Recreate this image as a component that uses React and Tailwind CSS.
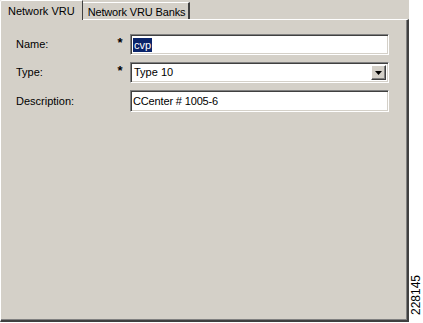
export default function App() {
  const font = { fontFamily: '"Liberation Sans", Arial, sans-serif' };
  const sunken =
    "border border-t-[#808080] border-l-[#808080] border-r-white border-b-white shadow-[inset_1px_1px_0_#404040,inset_-1px_-1px_0_#d4d0c8] bg-white";
  return (
    <div className="w-[423px] h-[323px] bg-white flex text-[11px] text-black" style={font}>
      <div className="w-[409px] h-[322px] flex flex-col bg-[#d4d0c8]">
        <div className="h-[19px] flex items-end pl-[2px] shrink-0">
          <div className="relative z-10 h-[20px] -mb-px -ml-[2px] px-[7px] pt-[2px] bg-[#d4d0c8] border-l border-t border-white border-r border-r-[#404040] rounded-tl-[2px]">
            Network VRU
          </div>
          <div className="h-[17px] pl-[5px] pr-[3px] pt-[1px] border-t border-white border-r-2 border-r-[#404040] tracking-[-0.15px]">
            Network VRU Banks
          </div>
        </div>
        <div className="flex-1 border-t border-l border-white border-r-2 border-r-[#404040] border-b-2 border-b-[#404040] shadow-[inset_-1px_-1px_0_#808080] flex flex-col pt-[14px] gap-[7px]">
          <div className="flex items-center h-[21px]">
            <div className="w-[105px] pl-[15px]">Name:</div>
            <div className="w-[24px] text-center text-[13px] font-bold leading-none -mt-[4px] pl-[4px]">*</div>
            <div className={`${sunken} w-[259px] h-[21px] flex items-center pl-[2px]`}>
              <span className="bg-[#0a246a] text-white px-[1px] leading-[14px]">cvp</span>
            </div>
          </div>
          <div className="flex items-center h-[21px]">
            <div className="w-[105px] pl-[15px]">Type:</div>
            <div className="w-[24px] text-center text-[13px] font-bold leading-none -mt-[4px] pl-[4px]">*</div>
            <div className={`${sunken} w-[259px] h-[21px] flex items-center pl-[3px] pr-[2px]`}>
              <span className="flex-1">Type 10</span>
              <div className="w-[15px] h-[15px] bg-[#d4d0c8] border border-t-white border-l-white border-r-[#404040] border-b-[#404040] shadow-[inset_-1px_-1px_0_#808080] flex items-center justify-center">
                <svg width="7" height="4" viewBox="0 0 7 4"><path d="M0 0h7L3.5 4z" fill="#000" /></svg>
              </div>
            </div>
          </div>
          <div className="flex items-center h-[22px]">
            <div className="w-[129px] pl-[15px]">Description:</div>
            <div className={`${sunken} w-[259px] h-[22px] flex items-center pl-[2px] tracking-[-0.15px]`}>CCenter # 1005-6</div>
          </div>
        </div>
      </div>
      <div className="flex-1 flex items-end justify-center pb-[8px]">
        <div className="[writing-mode:vertical-rl] rotate-180 text-[12px] leading-none">228145</div>
      </div>
    </div>
  );
}
